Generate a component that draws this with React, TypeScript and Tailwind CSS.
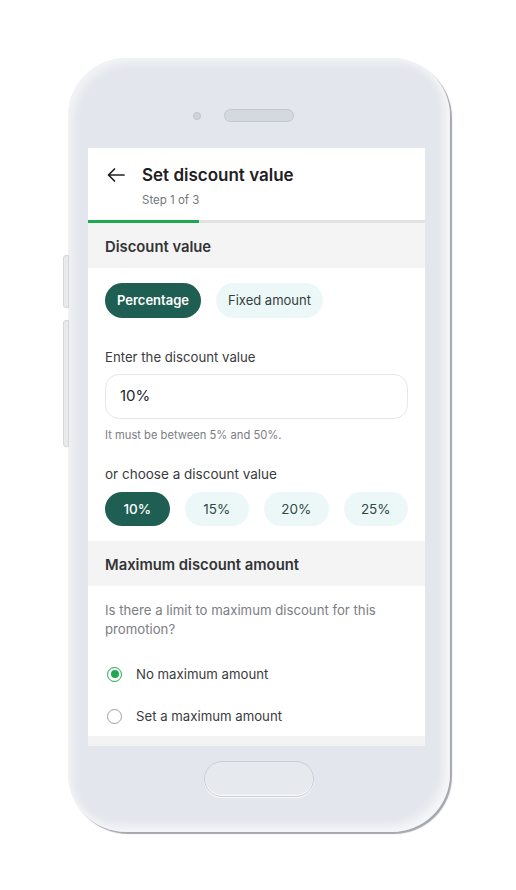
import React from "react";

function Radio({ checked, label }: { checked: boolean; label: string }) {
  return (
    <div className="flex items-center h-[24px]">
      <div
        className={
          checked
            ? "ml-[2px] w-[15px] h-[15px] rounded-full border-[1.5px] border-[#1fa750] flex items-center justify-center"
            : "ml-[2px] w-[15px] h-[15px] rounded-full border-[1.5px] border-[#9a9ea4]"
        }
      >
        {checked && <div className="w-[8px] h-[8px] rounded-full bg-[#1fa750]" />}
      </div>
      <span className="ml-[14px] text-[13.2px] leading-[20px] text-[#3a3b3e]">{label}</span>
    </div>
  );
}

function Chip({ label, active }: { label: string; active?: boolean }) {
  return (
    <div
      className={
        active
          ? "flex-1 h-[34px] rounded-full bg-[#1f5e53] text-white flex items-center justify-center text-[13.5px] font-medium"
          : "flex-1 h-[34px] rounded-full bg-[#ecf8f7] text-[#2f4a45] flex items-center justify-center text-[13.5px]"
      }
    >
      {label}
    </div>
  );
}

export default function App() {
  return (
    <div
      className="w-[516px] h-[890px] bg-white pt-[58px] pl-[68px]"
      style={{ fontFamily: "Inter, 'Noto Sans', sans-serif" }}
    >
      <div className="relative w-[382px] h-[774px] rounded-[58px] bg-[#e3e6ec] flex flex-col shadow-[2px_2px_1px_rgba(90,95,105,0.55),inset_5px_5px_10px_rgba(255,255,255,0.55),inset_-6px_-6px_10px_rgba(255,255,255,0.65)]">
        {/* side buttons */}
        <div className="absolute left-[-5px] top-[197px] w-[6px] h-[53px] rounded-l-[3px] bg-[#e8eaee] border border-[#d3d7de]" />
        <div className="absolute left-[-5px] top-[262px] w-[6px] h-[127px] rounded-l-[3px] bg-[#e8eaee] border border-[#d3d7de]" />

        {/* top: camera + speaker */}
        <div className="h-[90px] pt-[51px] flex justify-center">
          <div className="flex items-center h-[13px]">
            <div className="w-[8px] h-[8px] rounded-full bg-[#cfd3da] border border-[#bfc4cc]" />
            <div className="ml-[23px] w-[70px] h-[13px] rounded-full bg-[#d4d8df] border border-[#c2c7cf]" />
            <div className="ml-[23px] w-[8px] h-[8px]" />
          </div>
        </div>

        {/* screen */}
        <div className="ml-[20px] w-[337px] h-[598px] bg-white flex flex-col overflow-hidden">
          <div className="pl-[19px] pt-[15px]">
            <div className="flex items-center">
              <svg width="18" height="14" viewBox="0 0 18 14" fill="none">
                <path
                  d="M17 7H1.5M7.5 1L1.5 7l6 6"
                  stroke="#1f2023"
                  strokeWidth="1.7"
                  strokeLinecap="round"
                  strokeLinejoin="round"
                />
              </svg>
              <h1 className="ml-[17px] text-[17px] leading-[24px] font-semibold text-[#1f2023]">
                Set discount value
              </h1>
            </div>
            <p className="ml-[35px] mt-[5px] text-[11.5px] leading-[16px] text-[#74777d]">Step 1 of 3</p>
          </div>
          <div className="mt-[12px] h-[3px] bg-[#e2e2e2] flex">
            <div className="w-[111px] bg-[#1ea84f]" />
          </div>

          <div className="h-[45px] bg-[#f4f4f4] px-[17px] pt-[3px] flex items-center">
            <span className="text-[14.8px] font-semibold text-[#333437]">Discount value</span>
          </div>

          <div className="px-[17px]">
            <div className="pt-[15px] flex gap-[15px]">
              <div className="h-[35px] px-[12px] rounded-full bg-[#1f5e53] text-white text-[13px] font-semibold flex items-center">
                Percentage
              </div>
              <div className="h-[35px] px-[12px] rounded-full bg-[#ecf8f7] text-[#35403e] text-[13px] flex items-center">
                Fixed amount
              </div>
            </div>

            <p className="mt-[29px] text-[13.2px] leading-[20px] text-[#3a3b3e]">Enter the discount value</p>
            <div className="mt-[7px] h-[45px] rounded-[14px] border border-[#e6e7e9] flex items-center px-[14px]">
              <span className="text-[15px] text-[#27282b]">10%</span>
            </div>
            <p className="mt-[8px] text-[11.2px] leading-[16px] text-[#7b7e84]">It must be between 5% and 50%.</p>

            <p className="mt-[21px] text-[13.5px] leading-[20px] text-[#3a3b3e]">or choose a discount value</p>
            <div className="mt-[8px] flex gap-[15px]">
              <Chip label="10%" active />
              <Chip label="15%" />
              <Chip label="20%" />
              <Chip label="25%" />
            </div>
          </div>

          <div className="mt-[15px] h-[45px] bg-[#f4f4f4] px-[17px] pt-[3px] flex items-center">
            <span className="text-[14.8px] font-semibold text-[#333437]">Maximum discount amount</span>
          </div>

          <div className="px-[17px] pt-[15px]">
            <p className="text-[13.2px] leading-[19px] text-[#7b7e84]">
              Is there a limit to maximum discount for this promotion?
            </p>
            <div className="mt-[23px]">
              <Radio checked label="No maximum amount" />
            </div>
            <div className="mt-[18px]">
              <Radio checked={false} label="Set a maximum amount" />
            </div>
          </div>
          <div className="flex-1" />
          <div className="h-[10px] bg-[#f3f3f3]" />
        </div>

        {/* home button */}
        <div className="mt-[15px] flex justify-center">
          <div className="w-[110px] h-[36px] rounded-full border border-[#c9ced6] bg-[#e6e9ee] shadow-[inset_0_-1px_1px_rgba(255,255,255,0.9),0_1px_1px_rgba(255,255,255,0.8)]" />
        </div>
      </div>
    </div>
  );
}
